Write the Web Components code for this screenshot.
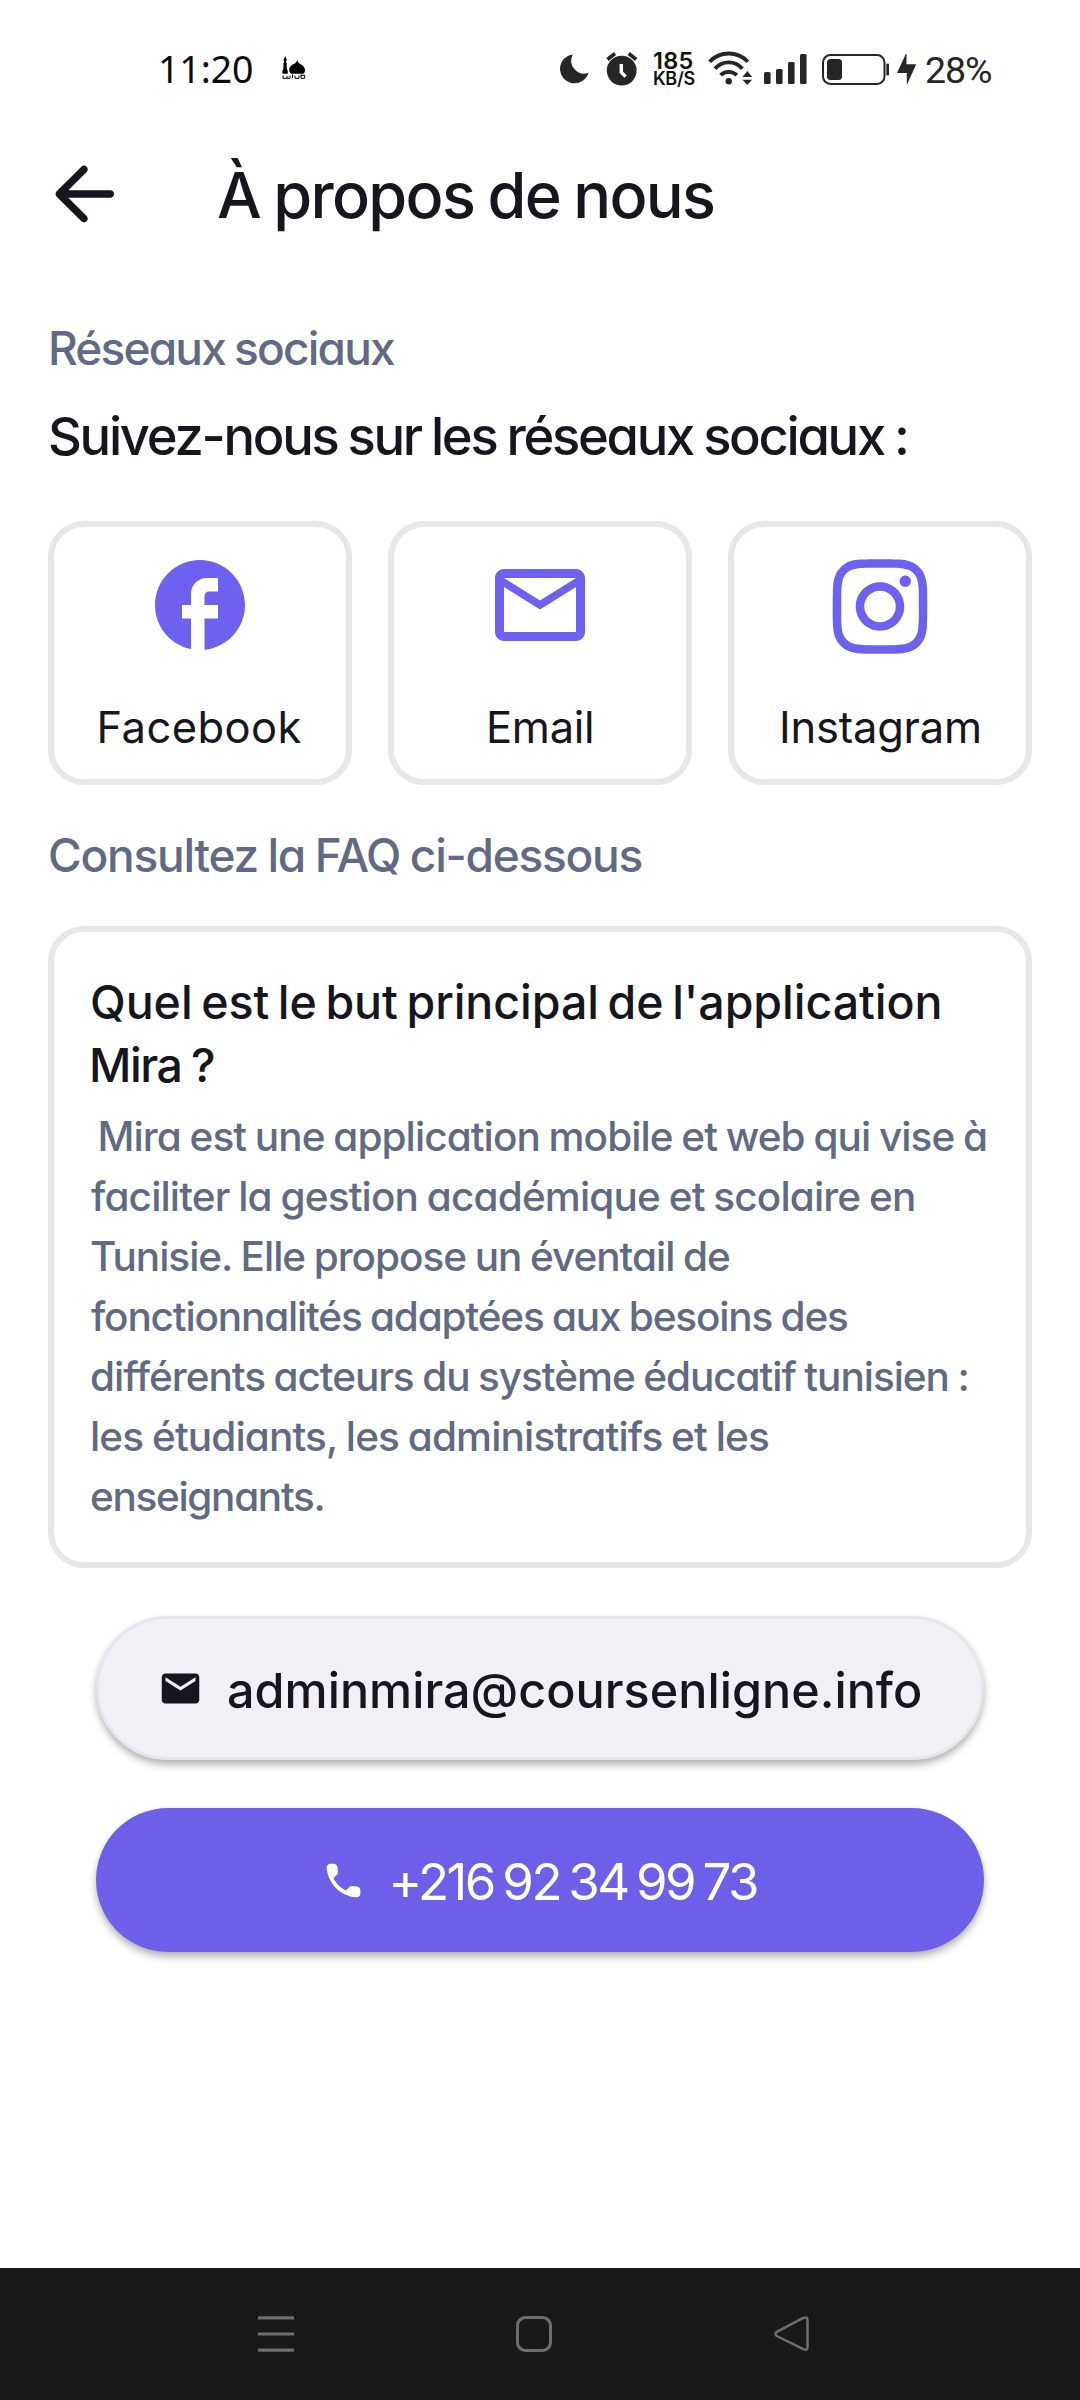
<!DOCTYPE html>
<html lang="fr">
<head>
<meta charset="utf-8">
<title>À propos de nous</title>
<style>
  body { margin: 0; background: #fff; }
</style>
</head>
<body>
<about-page></about-page>
<script>
const make = (name, html, extra) => customElements.define(name, class extends HTMLElement {
  connectedCallback() {
    if (this.shadowRoot) return;
    const root = this.attachShadow({ mode: "open" });
    root.innerHTML = html;
    if (extra) extra(this, root);
  }
});

const ICONS = {
  back: ["0 0 24 24", '<path d="M19 11H7.83l4.88-4.88c.39-.39.39-1.03 0-1.42-.39-.39-1.02-.39-1.41 0l-6.59 6.59c-.39.39-.39 1.02 0 1.41l6.59 6.59c.39.39 1.02.39 1.41 0 .39-.39.39-1.02 0-1.41L7.83 13H19c.55 0 1-.45 1-1s-.45-1-1-1z"/>'],
  facebook: ["0 0 24 24", '<path d="M22 12c0-5.52-4.48-10-10-10S2 6.48 2 12c0 4.84 3.44 8.87 8 9.8V15H8v-3h2V9.5C10 7.57 11.57 6 13.5 6H16v3h-2c-.55 0-1 .45-1 1v2h3v3h-3v6.95c5.05-.5 9-4.76 9-9.95z"/>'],
  mailOutline: ["0 0 24 24", '<path d="M22 6c0-1.1-.9-2-2-2H4c-1.1 0-2 .9-2 2v12c0 1.1.9 2 2 2h16c1.1 0 2-.9 2-2V6zm-2 0l-8 5-8-5h16zm0 12H4V8l8 5 8-5v10z"/>'],
  instagram: ["-32 -7 512 512", '<path d="M224.1 141c-63.6 0-114.9 51.3-114.9 114.9s51.3 114.9 114.9 114.9S339 319.5 339 255.9 287.7 141 224.1 141zm0 189.6c-41.1 0-74.7-33.5-74.7-74.7s33.5-74.7 74.7-74.7 74.7 33.5 74.7 74.7-33.6 74.7-74.7 74.7zm146.4-194.3c0 14.9-12 26.8-26.8 26.8-14.9 0-26.8-12-26.8-26.8s12-26.8 26.8-26.8 26.8 12 26.8 26.8zm76.1 27.2c-1.7-35.9-9.9-67.7-36.2-93.9-26.2-26.2-58-34.4-93.9-36.2-37-2.1-147.9-2.1-184.9 0-35.8 1.7-67.6 9.9-93.9 36.1s-34.4 58-36.2 93.9c-2.1 37-2.1 147.9 0 184.9 1.7 35.9 9.9 67.7 36.2 93.9s58 34.4 93.9 36.2c37 2.1 147.9 2.1 184.9 0 35.9-1.7 67.7-9.9 93.9-36.2 26.2-26.2 34.4-58 36.2-93.9 2.1-37 2.1-147.8 0-184.8zM398.8 388c-7.8 19.6-22.9 34.7-42.6 42.6-29.5 11.7-99.5 9-132.1 9s-102.7 2.6-132.1-9c-19.6-7.8-34.7-22.9-42.6-42.6-11.7-29.5-9-99.5-9-132.1s-2.6-102.7 9-132.1c7.8-19.6 22.9-34.7 42.6-42.6 29.5-11.7 99.5-9 132.1-9s102.7-2.6 132.1 9c19.6 7.8 34.7 22.9 42.6 42.6 11.7 29.5 9 99.5 9 132.1s2.7 102.7-9 132.1z"/>'],
  mail: ["0 0 24 24", '<path d="M20 4H4c-1.1 0-1.99.9-1.99 2L2 18c0 1.1.9 2 2 2h16c1.1 0 2-.9 2-2V6c0-1.1-.9-2-2-2zm0 4l-8 5-8-5V6l8 5 8-5v2z"/>'],
  phone: ["0 0 24 24", '<path d="M19.23 15.26l-2.54-.29c-.61-.07-1.21.14-1.64.57l-1.84 1.84c-2.83-1.44-5.15-3.75-6.59-6.59l1.85-1.85c.43-.43.64-1.03.57-1.64l-.29-2.52c-.12-1.01-.97-1.77-1.99-1.77H5.03c-1.13 0-2.07.94-2 2.07.53 8.54 7.36 15.36 15.89 15.89 1.13.07 2.07-.87 2.07-2v-1.73c.01-1.01-.75-1.86-1.76-1.98z"/>'],
  mosque: ["0 0 24 24", '<path d="M3.200 0l.8 2 .8 2-.7 1v2l1 .6-.5 1.300.4 4.600.8 1v3.200H.400v-3.200l.8-1 .4-4.600-.5-1.300 1-.6V5L1.400 4l1-2z"/><path d="M15.200 3.500c.5 2.800 1.300 3.500 4 5 2.700 1.500 4.200 4 3.800 6.500-.2 1.200-.8 2-1.500 2.800H9c-1.200-1.300-1.900-2.500-1.800-4.300.2-2.400 1.600-4 4-5.200 2.500-1.200 3.500-2 4-4.800z"/><path d="M1 19.500v2.800h7v-2.600M5 20v2M10.500 18.500v3.800M13 19.600v2.700h4v-3M19 18.500v3.800h3.600v-3h-3.600" fill="none" stroke="currentColor" stroke-width="1"/>'],
  moon: ["0 0 30 30", '<path d="M13.800.400A14.500 14.500 0 1 0 29.500 18.800 13 13 0 0 1 13.800.400z"/>'],
  alarm: ["0 0 32 34", '<circle cx="15.700" cy="18.600" r="14.900"/><path d="M1.500 7.500L9 1.500M30.200 7.500L22.700 1.500" stroke="currentColor" stroke-width="3.600" fill="none"/><path d="M15.300 12v8.200l4.300 4.500" stroke="#fff" stroke-width="3.400" fill="none"/>'],
  wifi: ["0 0 45 34", '<g fill="none" stroke="currentColor" stroke-width="3.900"><path d="M1.600 10.800A26 26 0 0 1 39.800 10.800"/><path d="M7 17.700A18 18 0 0 1 34.400 17.700"/><path d="M12.600 24.200A11.500 11.500 0 0 1 28.800 24.200"/></g><circle cx="20.700" cy="30.300" r="3.200"/><path d="M34.500 26l4.800-6 4.800 6zM34.500 28.700l4.800 5.300 4.800-5.300z"/>'],
  signal: ["0 0 43 30", '<rect y="18" width="6.600" height="12" rx="1.500"/><rect x="12" y="15" width="6.600" height="15" rx="1.500"/><rect x="24" y="8" width="6.600" height="22" rx="1.500"/><rect x="36" width="6.600" height="30" rx="1.500"/>'],
  battery: ["0 0 68 32", '<rect x="1" y="1" width="61.500" height="29" rx="7.500" fill="none" stroke="currentColor" stroke-width="2"/><rect x="5" y="5" width="15" height="21" rx="3.500"/><rect x="64.300" y="9.500" width="2.700" height="12" rx="1.300"/>'],
  bolt: ["0 0 20 31", '<path d="M8.800 0L0 19h9.800V31L19.200 10.300H9.500V0z"/>'],
  menu: ["0 0 36 36", '<path d="M0 1.800h36M0 18h36M0 34.200h36" fill="none" stroke="currentColor" stroke-width="3.200"/>'],
  home: ["0 0 36 36", '<rect x="1.500" y="1.500" width="33" height="33" rx="8" fill="none" stroke="currentColor" stroke-width="3"/>'],
  triangle: ["0 0 36 36", '<path d="M2.700 15.800L29.300 1.900Q33.500.3 33.500 4.200V31.200Q33.500 35 29.300 33.200L2.700 20Q.2 18 2.700 15.800z" fill="none" stroke="currentColor" stroke-width="2.500" stroke-linejoin="round"/>'],
};

make("ui-icon", `<style>
  :host { display: block; flex: none; }
  svg { display: block; width: 100%; height: 100%; fill: currentColor; overflow: visible; }
</style>`, (el, root) => {
  const [box, body] = ICONS[el.getAttribute("name")];
  root.innerHTML += `<svg viewBox="${box}">${body}</svg>`;
  el.style.width = el.getAttribute("w") + "px";
  el.style.height = (el.getAttribute("h") || el.getAttribute("w")) + "px";
});

make("status-bar", `<style>
  :host { display: flex; height: 100px; box-sizing: border-box; color: #262626; }
  .speed { margin: 52px 0 0 16px; color: #111; }
</style>
<fit-text style="margin:48px 0 0 161px;color:#0c0c0c" w="91" size="37.500" lh="42" weight="450" font="Noto Sans">11:20</fit-text>
<ui-icon style="margin:56px 0 0 30px;color:#000" name="mosque" w="24"></ui-icon>
<ui-icon style="margin:54px 0 0 253px" name="moon" w="30"></ui-icon>
<ui-icon style="margin:52px 0 0 17px" name="alarm" w="32" h="34"></ui-icon>
<div class="speed">
  <fit-text w="38.500" size="23.500" lh="18" weight="600">185</fit-text>
  <fit-text w="40.500" size="18" lh="18" weight="600">KB/S</fit-text>
</div>
<ui-icon style="margin:51px 0 0 13.500px" name="wifi" w="45" h="34"></ui-icon>
<ui-icon style="margin:54px 0 0 10.500px" name="signal" w="43" h="30"></ui-icon>
<ui-icon style="margin:54px 0 0 15.500px" name="battery" w="68" h="32"></ui-icon>
<ui-icon style="margin:54px 0 0 7px" name="bolt" w="20" h="31"></ui-icon>
<fit-text style="margin:49px 0 0 9px" w="65" size="37.500" lh="42" font="Roboto">28%</fit-text>`);

make("app-bar", `<style>
  :host { display: flex; align-items: center; height: 187px; padding-left: 39px; gap: 89px; color: #15161e; }
  fit-text { margin-top: 3px; }
</style>
<ui-icon name="back" w="90"></ui-icon>
<fit-text w="496" size="63" lh="80" weight="540" ws="-.03" geo>À propos de nous</fit-text>`);

make("social-card", `<style>
  :host { display: flex; flex-direction: column; align-items: center; flex: 1; height: 264px; box-sizing: border-box;
    padding-top: 24px; border: 6px solid #e5e7eb; border-radius: 36px; color: #15161e; }
  ui-icon { color: #6f61ef; margin-bottom: 41px; }
</style>`, (el, root) => {
  root.innerHTML += `<ui-icon name="${el.getAttribute("icon")}" w="108"></ui-icon>
    <fit-text style="margin-left:1px" w="${el.getAttribute("w")}" size="43.500" lh="54">${el.getAttribute("label")}</fit-text>`;
});

make("faq-card", `<style>
  :host { display: block; height: 642px; box-sizing: border-box; border: 6px solid #e5e7eb; border-radius: 36px;
    padding: 39px 37px 0; color: #15161e; }
  .answer { margin-top: 10px; color: #606a85; }
</style>
<slot name="question"></slot>
<div class="answer"><slot></slot></div>`);

make("pill-button", `<style>
  :host { display: flex; align-items: center; height: 144px; box-sizing: border-box; border-radius: 72px;
    box-shadow: 0 6px 9px -1px rgba(0,0,0,.24), 0 2px 6px rgba(0,0,0,.12); }
  :host([kind="light"]) { background: #f2eff7; border: 3px solid #e5e7eb; color: #15161e; padding-left: 58.500px; gap: 25.500px; }
  :host([kind="primary"]) { background: #6d5fe7; color: #fff; padding-left: 225px; gap: 26.500px; }
</style><slot></slot>`);

make("nav-bar", `<style>
  :host { display: flex; align-items: flex-start; height: 132px; box-sizing: border-box; padding: 48px 0 0 258px;
    background: #191919; color: #6e6e6e; gap: 222px; }
</style>
<ui-icon name="menu" w="36"></ui-icon>
<ui-icon name="home" w="36"></ui-icon>
<ui-icon name="triangle" w="36"></ui-icon>`);

make("about-page", `<style>
  :host { display: flex; flex-direction: column; width: 1080px; height: 2400px; background: #fff; overflow: hidden; }
  main { flex: 1; padding: 31px 48px 0; color: #15161e; }
  .muted { color: #606a85; }
  .row { display: flex; gap: 36px; margin: 49px 0 40px; }
  .buttons { display: flex; flex-direction: column; gap: 48px; padding: 48px 48px 0; }
</style>
<status-bar></status-bar>
<app-bar></app-bar>
<main>
  <fit-text class="muted" style="margin-left:3px" w="344" size="46" lh="60" weight="550" ws="-.03" geo>Réseaux sociaux</fit-text>
  <fit-text style="margin:22px 0 0 2px" w="856" size="52.500" lh="72" weight="550" ws="-.03" geo>Suivez-nous sur les réseaux sociaux :</fit-text>
  <div class="row">
    <social-card icon="facebook" label="Facebook" w="202"></social-card>
    <social-card icon="mailOutline" label="Email" w="103"></social-card>
    <social-card icon="instagram" label="Instagram" w="197"></social-card>
  </div>
  <fit-text class="muted" style="margin:0 0 41px 2px" w="591.500" size="46" lh="60" weight="550" ws="-.03" geo>Consultez la FAQ ci-dessous</fit-text>
  <faq-card>
    <fit-text slot="question" style="margin-left:1px" w="847.500" size="46.500" lh="63" weight="500" ws="-.08">Quel est le but principal de l'application</fit-text>
    <fit-text slot="question" style="margin-left:1px" w="122" size="46.500" lh="63" weight="500" ws="-.03">Mira ?</fit-text>
    <fit-text style="margin-left:9.500px" w="885.500" size="40.500" lh="60" weight="550" ws="-.03" geo>Mira est une application mobile et web qui vise à</fit-text>
    <fit-text w="823" size="40.500" lh="60" weight="550" ws="-.03" geo>faciliter la gestion académique et scolaire en</fit-text>
    <fit-text w="638" size="40.500" lh="60" weight="550" ws="-.03" geo>Tunisie. Elle propose un éventail de</fit-text>
    <fit-text w="756" size="40.500" lh="60" weight="550" ws="-.03" geo>fonctionnalités adaptées aux besoins des</fit-text>
    <fit-text w="876.500" size="40.500" lh="60" weight="550" ws="-.03" geo>différents acteurs du système éducatif tunisien :</fit-text>
    <fit-text style="margin-left:1px" w="676" size="40.500" lh="60" weight="550" ws="-.03" geo>les étudiants, les administratifs et les</fit-text>
    <fit-text w="232.500" size="40.500" lh="60" weight="550" geo>enseignants.</fit-text>
  </faq-card>
  <div class="buttons">
    <pill-button kind="light">
      <ui-icon name="mail" w="45"></ui-icon>
      <fit-text style="margin-top:5px" w="693" size="48.500" lh="60" weight="500">adminmira@coursenligne.info</fit-text>
    </pill-button>
    <pill-button kind="primary">
      <ui-icon name="phone" w="45"></ui-icon>
      <fit-text style="margin-top:3px" w="364.500" size="51" lh="60" ws="-.07">+216 92 34 99 73</fit-text>
    </pill-button>
  </div>
</main>
<nav-bar></nav-bar>`);

/* One line of text tracked so that its visible glyphs span exactly `w` pixels. */
const pen = document.createElement("canvas").getContext("2d");
make("fit-text", `<style>
  :host { display: block; flex: none; }
  span { display: inline-block; vertical-align: top; white-space: pre; }
</style><span><slot></slot></span>`, (el, root) => {
  const span = root.querySelector("span");
  const attr = (name, fallback) => el.getAttribute(name) || fallback;
  const size = +attr("size"), w = +attr("w"), lh = attr("lh"), weight = attr("weight", 400);
  const family = `"${attr("font", "Inter")}", "Liberation Sans", sans-serif`;
  const chars = [...el.textContent];
  el.style.width = w + "px";
  el.style.height = lh + "px";
  span.style.cssText = `font:${weight} ${size}px/${lh}px ${family};word-spacing:${attr("ws", 0)}em`;
  /* single-storey "a" for the geometric headings; set after the font shorthand, which resets it */
  if (el.hasAttribute("geo")) span.style.fontFeatureSettings = '"cv11" 1';
  pen.font = `${weight} ${size}px ${family}`;
  const first = pen.measureText(chars[0]), last = pen.measureText(chars[chars.length - 1]);
  const left = -first.actualBoundingBoxLeft, right = last.width - last.actualBoundingBoxRight;
  const natural = span.getBoundingClientRect().width;
  span.style.letterSpacing = (w + left + right - natural) / (chars.length - 1) + "px";
  span.style.marginLeft = -left + "px";
});
</script>
</body>
</html>
